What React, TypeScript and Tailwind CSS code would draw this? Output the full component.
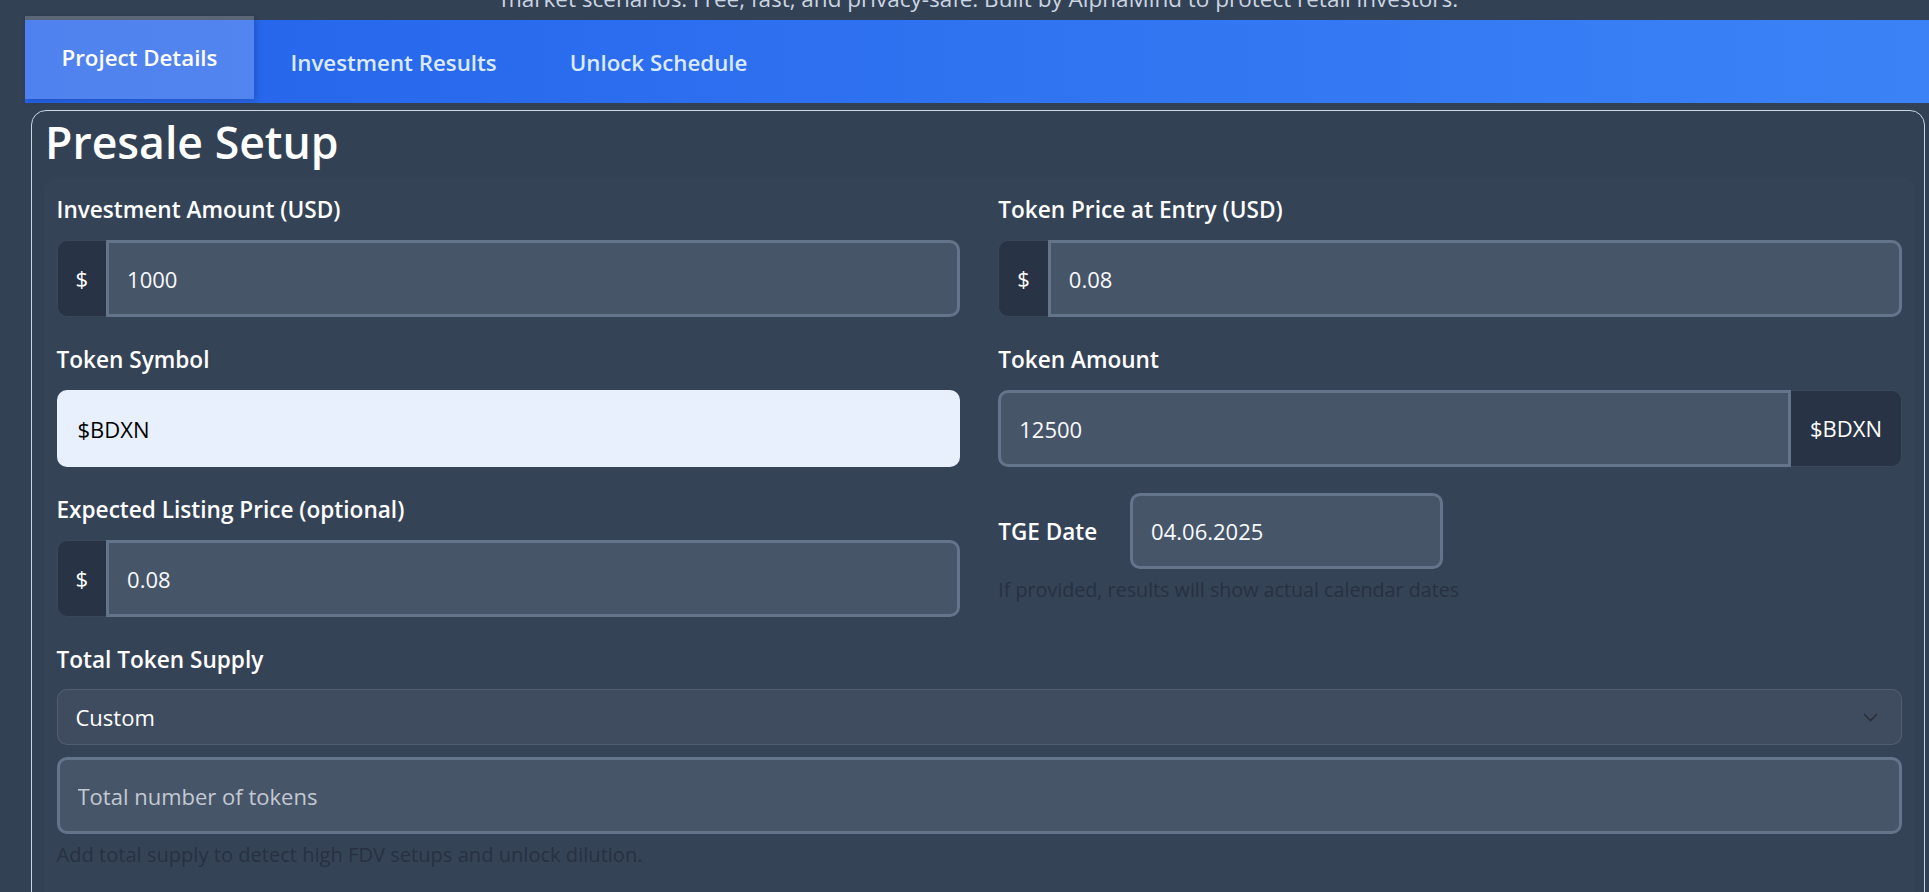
import React from "react";

function Label({ children }: { children: React.ReactNode }) {
  return (
    <label className="block text-[22.6px] leading-[33px] font-semibold text-white mb-[14px]">
      {children}
    </label>
  );
}

const inputBase =
  "h-[77px] min-w-0 flex-1 bg-[#475569] border-[3px] border-[#64748b] text-[22px] text-[#f8fafc] pl-[18px] outline-none placeholder:text-[#c3c9d2]";

function DollarInput({ value }: { value: string }) {
  return (
    <div className="flex h-[77px]">
      <span className="flex items-center px-[18px] bg-[#283445] border border-r-0 border-[#3a4659] rounded-l-[10px] text-[22px] text-white">
        $
      </span>
      <input readOnly defaultValue={value} className={inputBase + " rounded-r-[10px]"} />
    </div>
  );
}

export default function App() {
  return (
    <div className="h-[892px] w-full overflow-hidden bg-[#334155] font-['Open_Sans',sans-serif] text-white">
      {/* subtitle (scrolled mostly out of view) */}
      <p className="-mt-[18px] pl-[30px] text-center text-[22.5px] leading-[34px] text-[#cbd5e1] whitespace-nowrap">
        market scenarios. Free, fast, and privacy-safe. Built by AlphaMind to protect retail investors.
      </p>

      {/* tab bar */}
      <nav className="mt-[4px] ml-[25px] flex h-[83px] bg-gradient-to-r from-[#2563eb] to-[#3b82f6]">
        <button className="-translate-y-[4px] flex h-[83px] items-center px-[36.5px] bg-white/20 text-[22.3px] font-semibold text-white shadow-[2px_2px_6px_rgba(0,0,0,0.18)]">
          Project Details
        </button>
        <button className="flex h-[83px] items-center px-[36.5px] pt-[2px] text-[22.3px] font-semibold text-[#dbeafe]">
          Investment Results
        </button>
        <button className="flex h-[83px] items-center px-[36.5px] pt-[2px] text-[22.3px] font-semibold text-[#dbeafe]">
          Unlock Schedule
        </button>
      </nav>

      {/* card */}
      <section className="mt-[7px] ml-[31px] mr-[4px] rounded-[15px] border border-[#cbd5e1] pt-[4px] pl-[12px] pr-[9px] pb-[40px]">
        <h1 className="pl-[1px] text-[44.6px] leading-[53px] font-semibold text-white">Presale Setup</h1>

        <div className="mt-[9px] rounded-[12px] bg-white/[0.012] pt-[16px] pl-[12.5px] pr-[13px] pb-[40px]">
          <div className="grid grid-cols-2 gap-x-[38px] gap-y-[26px]">
            {/* row 1 */}
            <div>
              <Label>Investment Amount (USD)</Label>
              <DollarInput value="1000" />
            </div>
            <div>
              <Label>Token Price at Entry (USD)</Label>
              <DollarInput value="0.08" />
            </div>

            {/* row 2 */}
            <div>
              <Label>Token Symbol</Label>
              <input
                readOnly
                defaultValue="$BDXN"
                className="block h-[77px] w-full rounded-[10px] border-[3px] border-[#e8f0fe] bg-[#e8f0fe] pl-[18px] text-[22px] text-black outline-none"
              />
            </div>
            <div>
              <Label>Token Amount</Label>
              <div className="flex h-[77px]">
                <input readOnly defaultValue="12500" className={inputBase + " rounded-l-[10px]"} />
                <span className="flex items-center px-[19px] bg-[#283445] border border-l-0 border-[#3a4659] rounded-r-[10px] text-[22px] text-white">
                  $BDXN
                </span>
              </div>
            </div>

            {/* row 3 */}
            <div>
              <Label>Expected Listing Price (optional)</Label>
              <DollarInput value="0.08" />
            </div>
            <div>
              <div className="flex items-center gap-[33px]">
                <span className="text-[22.5px] leading-[33px] font-semibold text-white">TGE Date</span>
                <input
                  readOnly
                  defaultValue="04.06.2025"
                  className="h-[76px] w-[313px] rounded-[10px] border-[3px] border-[#64748b] bg-[#475569] pl-[18px] text-[22px] text-[#f8fafc] outline-none"
                />
              </div>
              <p className="mt-[6px] text-[19.7px] leading-[30px] text-[#273141]">
                If provided, results will show actual calendar dates
              </p>
            </div>

            {/* row 4 */}
            <div className="col-span-2">
              <Label>Total Token Supply</Label>
              <div className="-mt-[1px] flex h-[56px] items-center justify-between rounded-[10px] border border-white/10 bg-white/5 pl-[18px] pr-[23px] text-[22px] text-white">
                <span>Custom</span>
                <svg width="15" height="9" viewBox="0 0 15 9" fill="none">
                  <polyline points="1,1 7.5,7.5 14,1" stroke="#2a2f38" strokeWidth="1.6" />
                </svg>
              </div>
              <input
                readOnly
                placeholder="Total number of tokens"
                className={inputBase + " mt-[12px] block w-full rounded-[10px]"}
              />
              <p className="mt-[6px] text-[20.1px] leading-[30px] text-[#273141]">
                Add total supply to detect high FDV setups and unlock dilution.
              </p>
            </div>
          </div>
        </div>
      </section>
    </div>
  );
}
